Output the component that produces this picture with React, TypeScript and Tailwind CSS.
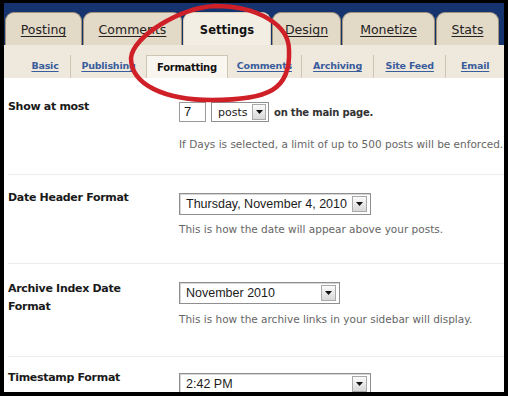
import React from 'react';

const tabs = [
  { label: 'Posting', w: 'w-[77px]', active: false },
  { label: 'Comments', w: 'w-[99px]', active: false },
  { label: 'Settings', w: 'w-[88px]', active: true },
  { label: 'Design', w: 'w-[69px]', active: false },
  { label: 'Monetize', w: 'w-[93px]', active: false },
  { label: 'Stats', w: 'w-[63px]', active: false },
];

const subTabs = [
  { label: 'Basic', w: 'w-[53px]', active: false },
  { label: 'Publishing', w: 'w-[79px]', active: false },
  { label: 'Formatting', w: 'w-[84px]', active: true },
  { label: 'Comments', w: 'w-[77px]', active: false },
  { label: 'Archiving', w: 'w-[75px]', active: false },
  { label: 'Site Feed', w: 'w-[75px]', active: false },
  { label: 'Email', w: 'w-[60px]', active: false },
];

const DropButton = ({ className }: { className?: string }) => (
  <div
    className={`flex items-center justify-center border border-[#a9a9a9] bg-linear-to-b from-[#fbfbfb] to-[#d8d8d8] ${className ?? ''}`}
  >
    <svg width="7" height="4" viewBox="0 0 7 4">
      <path d="M0 0h7L3.5 4z" fill="#111" />
    </svg>
  </div>
);

const Select = ({ value, width }: { value: string; width: string }) => (
  <div
    className={`relative flex h-[22px] items-center border border-[#8f8f8f] bg-white pl-[6px] font-['Liberation_Sans',Arial,sans-serif] text-[12.5px] text-[#1c1c1c] shadow-[inset_1px_1px_0_#d6d6d6] ${width}`}
  >
    <span>{value}</span>
    <DropButton className="absolute right-[3px] top-[2px] h-[16px] w-[15px]" />
  </div>
);

const Desc = ({ children, className }: { children: React.ReactNode; className?: string }) => (
  <p className={`whitespace-nowrap text-[10.5px] leading-[13px] text-[#666] ${className ?? ''}`}>{children}</p>
);

export default function App() {
  return (
    <div className="h-[396px] w-[508px] bg-black pl-[4px] pt-[3px] font-['DejaVu_Sans',Verdana,sans-serif]">
      <div className="relative h-[389px] w-[500px] overflow-hidden bg-white">
        {/* main tabs */}
        <div className="flex h-[42px] items-end gap-[1px] bg-[#15346f] pl-[1px]">
          {tabs.map((t) => (
            <div
              key={t.label}
              className={`flex h-[33px] items-center justify-center rounded-t-[9px] border border-b-0 pt-[3px] ${t.w} ${
                t.active
                  ? 'border-[#d8cdb8] bg-[#f3eee4] text-[11.5px] font-bold text-[#111]'
                  : 'border-[#9f927a] bg-[#e2d9c7] text-[12.5px] text-[#222] underline underline-offset-2'
              }`}
            >
              {t.label}
            </div>
          ))}
        </div>

        {/* sub tabs */}
        <div className="flex h-[33px] items-end bg-[#efe9dd] pl-[16px]">
          {subTabs.map((s, i) => (
            <div
              key={s.label}
              className={`flex h-[23px] items-center justify-center text-[9.5px] font-bold tracking-[-0.2px] ${s.w} ${
                i < subTabs.length - 1 ? 'border-r border-[#cfc5b3]' : ''
              } ${
                s.active
                  ? 'border-t bg-[#f9f6f0] text-[10px] tracking-[-0.3px] text-[#111]'
                  : 'text-[#3a5c9c] underline underline-offset-2'
              }`}
            >
              {s.label}
            </div>
          ))}
        </div>

        {/* settings rows */}
        <div className="pl-[4px] text-[#1a1a1a]">
          <div className="flex pb-[23px] pt-[20px]">
            <div className="w-[171px] text-[11px] font-bold leading-[18px] tracking-[-0.3px]">Show at most</div>
            <div className="pt-[4px]">
              <div className="flex items-center">
                <div className="flex h-[20px] w-[27px] items-center border border-[#9a9a9a] pl-[4px] font-['Liberation_Sans',Arial,sans-serif] text-[13px]">
                  7
                </div>
                <div className="relative ml-[5px] flex h-[20px] w-[58px] items-center border border-[#8f8f8f] pl-[6px] text-[11px] leading-none text-[#222]">
                  posts
                  <DropButton className="absolute right-[2px] top-[1px] h-[16px] w-[14px]" />
                </div>
                <span className="ml-[5px] text-[10px] font-bold tracking-[-0.2px] text-[#333]">on the main page.</span>
              </div>
              <Desc className="mt-[16px]">If Days is selected, a limit of up to 500 posts will be enforced.</Desc>
            </div>
          </div>

          <div className="flex border-t border-[#ececec] pb-[27px] pt-[14px]">
            <div className="w-[171px] text-[11px] font-bold leading-[18px] tracking-[-0.3px]">Date Header Format</div>
            <div className="pt-[4px]">
              <Select value="Thursday, November 4, 2010" width="w-[192px]" />
              <Desc className="mt-[8px]">This is how the date will appear above your posts.</Desc>
            </div>
          </div>

          <div className="flex border-t border-[#ececec] pb-[30px] pt-[14px]">
            <div className="w-[171px] pt-[2px] text-[11px] font-bold leading-[18px] tracking-[-0.3px]">
              Archive Index Date
              <br />
              Format
            </div>
            <div className="pt-[4px]">
              <Select value="November 2010" width="w-[161px]" />
              <Desc className="mt-[9px]">This is how the archive links in your sidebar will display.</Desc>
            </div>
          </div>

          <div className="flex border-t border-[#ececec] pt-[12px]">
            <div className="w-[171px] text-[11px] font-bold leading-[18px] tracking-[-0.3px]">Timestamp Format</div>
            <div className="pt-[4px]">
              <Select value="2:42 PM" width="w-[192px]" />
            </div>
          </div>
        </div>

        {/* hand-drawn red circle */}
        <svg className="pointer-events-none absolute left-0 top-0" width="500" height="389" viewBox="0 0 500 389">
          <g transform="translate(-4,-3)">
            <path
              d="M131 58 C133 36 180 8 215 6 C258 6 289 25 289 50 C291 90 268 100 212 100 C165 100 131 85 131 58 Z"
              fill="none"
              stroke="#cf1f27"
              strokeWidth="4.5"
              strokeLinecap="round"
            />
          </g>
        </svg>
      </div>
    </div>
  );
}
